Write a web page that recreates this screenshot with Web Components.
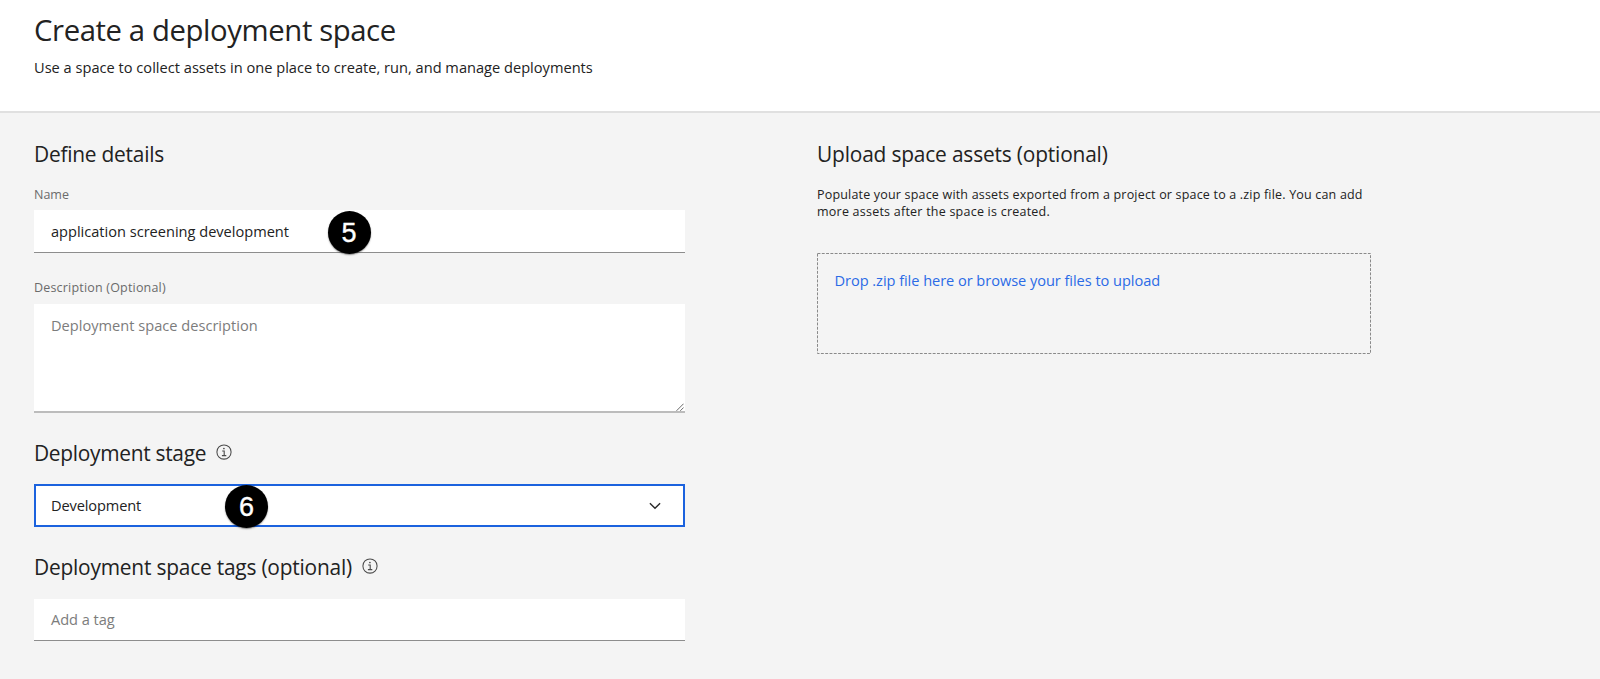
<!DOCTYPE html>
<html lang="en">
<head>
<meta charset="utf-8">
<title>Create a deployment space</title>
<style>
  html, body { margin: 0; height: 100%; }
  body { font-family: "Open Sans", "Noto Sans", sans-serif; color: #222; background: #f4f4f4; overflow: hidden; }
</style>
</head>
<body>
<space-page></space-page>
<script>
function define(name, html) {
  const template = document.createElement('template');
  template.innerHTML = html;
  customElements.define(name, class extends HTMLElement {
    constructor() {
      super();
      this.attachShadow({ mode: 'open' }).append(template.content.cloneNode(true));
    }
  });
}

define('info-icon', `
  <style>:host { display: block; width: 16px; height: 16px; } svg { display: block; }</style>
  <svg width="16" height="16" viewBox="0 0 16 16" fill="none" stroke="#4a4a4a">
    <circle cx="8" cy="8" r="7.1" stroke-width="1.05"/>
    <path d="M6.2 7h2v4.4M5.9 11.6h4.4" stroke-width="1.1"/>
    <circle cx="7.9" cy="4.5" r=".85" fill="#4a4a4a" stroke="none"/>
  </svg>`);

define('chevron-icon', `
  <style>:host { display: block; width: 12px; height: 8px; } svg { display: block; }</style>
  <svg width="12" height="8" viewBox="0 0 12 8" fill="none" stroke="#2a2a2a" stroke-width="1.4">
    <path d="M.9 1.2 6 6.3l5.1-5.1"/>
  </svg>`);

define('step-badge', `
  <style>
    :host { position: absolute; box-sizing: border-box; width: 43px; height: 43px; border-radius: 50%; background: #000; color: #fff;
      box-shadow: 0 1px 1.5px rgba(0,0,0,.45); text-align: center; padding-top: 1px;
      font: 27px/43px "Liberation Sans", Arial, sans-serif; letter-spacing: 0; -webkit-text-stroke: .4px #fff; z-index: 1; }
  </style><slot></slot>`);

define('section-title', `
  <style>
    :host { display: flex; align-items: flex-start; height: 28px; font-size: 20.9px; line-height: 28px; white-space: nowrap; }
    ::slotted(info-icon) { margin: 4.8px 0 0 9.6px; }
  </style><slot></slot>`);

define('field-label', `
  <style>:host { display: block; height: 18px; font-size: 12.5px; line-height: 18px; color: #6b6b6b; white-space: nowrap; }</style>
  <slot></slot>`);

define('form-field', `
  <style>
    :host { display: block; position: relative; box-sizing: border-box; width: 651.3px; height: 43px; background: #fff;
      border-bottom: 1px solid #8d8d8d; padding: 11px 17px 0; font-size: 14.6px; line-height: 20px; white-space: nowrap; }
    :host([empty]) { color: #7c7c7c; padding-top: 10px; }
    :host([area]) { height: 109px; padding-top: 11px; border-bottom: 2px solid #bcbcbc; }
    :host([select]) { display: flex; justify-content: space-between; border: 2px solid #1b62de; padding: 9px 22px 0 15px; }
    .grip { display: none; position: absolute; right: 1px; bottom: 0; }
    :host([area]) .grip { display: block; }
    chevron-icon { display: none; margin-top: 7px; }
    :host([select]) chevron-icon { display: block; }
  </style>
  <slot></slot>
  <chevron-icon></chevron-icon>
  <svg class="grip" width="8" height="8" viewBox="0 0 8 8" stroke="#6a6a6a" stroke-width="1"><path d="M.5 7.8 7.6.7M4.3 7.8l3.3-3.3"/></svg>`);

define('drop-zone', `
  <style>
    :host { display: block; position: relative; box-sizing: border-box; width: 554px; height: 101px; padding: 17px 17.5px;
      font-size: 14.6px; line-height: 20px; color: #2b6be6; white-space: nowrap; }
    svg { position: absolute; inset: 0; }
  </style>
  <svg width="554" height="101" fill="none" stroke="#8a8a8a" stroke-width="1">
    <rect x=".5" y=".5" width="553" height="100" stroke-dasharray="2.9 1.4"/>
  </svg>
  <slot></slot>`);

define('page-header', `
  <style>
    :host { display: block; box-sizing: border-box; height: 113px; padding: 12px 34px 0; background: #fff;
      border-bottom: 2px solid #e0e0e0; white-space: nowrap; }
    h1 { margin: 0; font-size: 29.3px; font-weight: 400; line-height: 36px; letter-spacing: -.4px; }
    p { margin: 9px 0 0; font-size: 14.6px; line-height: 20px; letter-spacing: .01px; }
  </style>
  <h1><slot name="title"></slot></h1>
  <p><slot></slot></p>`);

define('space-page', `
  <style>
    :host { display: block; }
    main { display: grid; grid-template-columns: 783px 1fr; padding: 27px 0 0 34px; }
    section { display: flex; flex-direction: column; align-items: flex-start; }
    .copy { margin-top: 18px; font-size: 12.5px; line-height: 17px; white-space: nowrap; }
    .copy div { height: 17px; }
  </style>
  <page-header><span slot="title">Create a deployment space</span>Use a space to collect assets in one place to create, run, and manage deployments</page-header>
  <main>
    <section>
      <section-title style="letter-spacing:-.229px">Define details</section-title>
      <field-label style="margin-top:18px">Name</field-label>
      <form-field style="margin-top:6px;letter-spacing:-.01px">application screening development<step-badge style="left:293.5px;top:1.2px">5</step-badge></form-field>
      <field-label style="margin-top:26px;letter-spacing:.19px">Description (Optional)</field-label>
      <form-field area empty style="margin-top:7px;letter-spacing:.01px">Deployment space description</form-field>
      <section-title style="margin-top:26px;letter-spacing:-.29px">Deployment stage<info-icon></info-icon></section-title>
      <form-field select style="margin-top:17px;letter-spacing:-.122px">Development<step-badge style="left:189px;top:-.8px">6</step-badge></form-field>
      <section-title style="margin-top:26px;letter-spacing:-.21px">Deployment space tags (optional)<info-icon></info-icon></section-title>
      <form-field empty style="margin-top:18px;height:42px;letter-spacing:-.03px">Add a tag</form-field>
    </section>
    <section>
      <section-title style="letter-spacing:-.174px">Upload space assets (optional)</section-title>
      <div class="copy">
        <div style="letter-spacing:.186px">Populate your space with assets exported from a project or space to a .zip file. You can add</div>
        <div style="letter-spacing:.23px">more assets after the space is created.</div>
      </div>
      <drop-zone style="margin-top:33px;letter-spacing:-.05px">Drop .zip file here or browse your files to upload</drop-zone>
    </section>
  </main>`);
</script>
</body>
</html>
